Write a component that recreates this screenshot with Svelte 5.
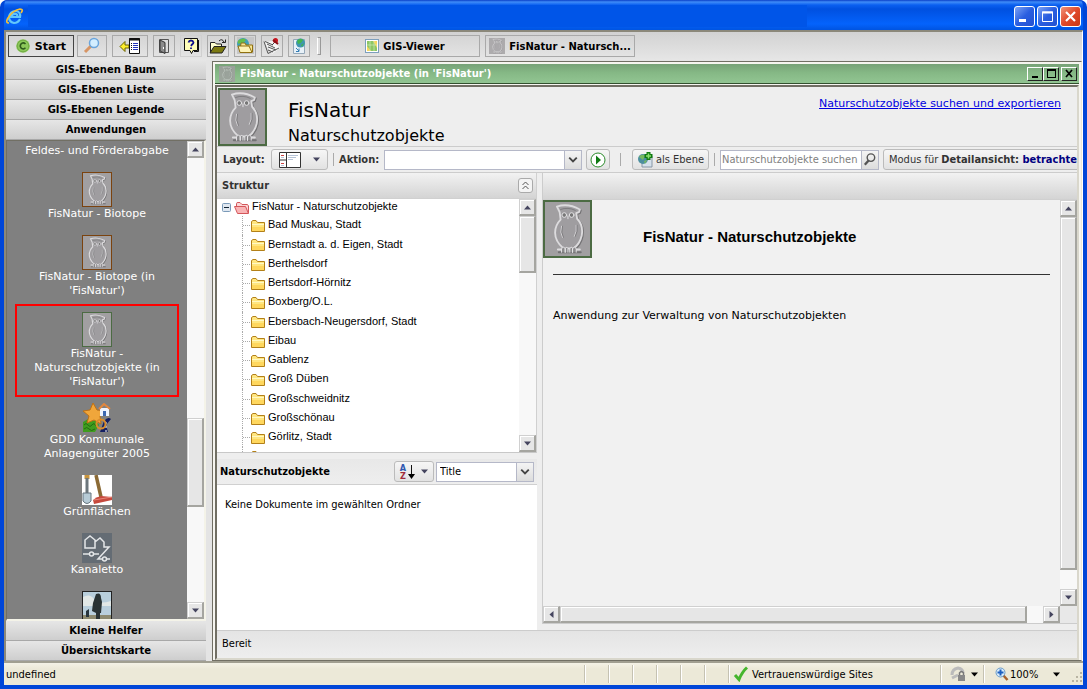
<script>
  const toolIcons = [
    { name: "help", label: "Hilfe" },
    { name: "open", label: "Öffnen" },
    { name: "globeFolder", label: "Dienste" },
    { name: "pin", label: "Notiz" },
    { name: "pageGlobe", label: "Export" },
  ];

  const topSections = ["GIS-Ebenen Baum", "GIS-Ebenen Liste", "GIS-Ebenen Legende", "Anwendungen"];
  const bottomSections = ["Kleine Helfer", "Übersichtskarte"];

  const apps = [
    { icon: "", title: "Feldes- und Förderabgabe" },
    { icon: "owlBrown", title: "FisNatur - Biotope" },
    { icon: "owlBrown", title: "FisNatur - Biotope (in 'FisNatur')" },
    { icon: "owlGreen", title: "FisNatur - Naturschutzobjekte (in 'FisNatur')", selected: true },
    { icon: "star", title: "GDD Kommunale Anlagengüter 2005" },
    { icon: "broom", title: "Grünflächen" },
    { icon: "canal", title: "Kanaletto" },
    { icon: "tree", title: "" },
  ];

  const folders = [
    "Bad Muskau, Stadt",
    "Bernstadt a. d. Eigen, Stadt",
    "Berthelsdorf",
    "Bertsdorf-Hörnitz",
    "Boxberg/O.L.",
    "Ebersbach-Neugersdorf, Stadt",
    "Eibau",
    "Gablenz",
    "Groß Düben",
    "Großschweidnitz",
    "Großschönau",
    "Görlitz, Stadt",
    "",
  ];

  let action = $state("");
  let sortField = $state("Title");
  let query = $state("");
</script>

{#snippet owl(cls)}
  <svg class="owl {cls}" viewBox="0 0 49 58" preserveAspectRatio="none" aria-hidden="true">
    <rect width="49" height="58" fill="#a19fa1" />
    <g fill="none" stroke-linejoin="round" stroke-linecap="round">
      <g stroke="#737274" stroke-width="2" transform="translate(1 1)">
        <path d="M13 5 Q25 1 38 8 L37 11 L34 12 L35 18 Q42 25 40 36 Q38 45 31 50 H20 Q11 42 11 33 Q11 25 17 19 L16 11 Z" />
        <path d="M14 53 H38" />
      </g>
      <g stroke="#dcdbdd" stroke-width="2">
        <path fill="#9f9da0" d="M13 5 Q25 1 38 8 L37 11 L34 12 L35 18 Q42 25 40 36 Q38 45 31 50 H20 Q11 42 11 33 Q11 25 17 19 L16 11 Z" />
        <path stroke-width="1" d="M18 26 Q16 33 19 38 M34 25 Q35 32 32 37" />
        <path d="M14 51 H18 M33 51 H38" />
      </g>
      <path d="M19 26 Q17 33 20 38 M35 25 Q36 32 33 37 M17 8 Q25 5 33 9" stroke="#7b7a7c" />
      <g stroke="#e8e7e9" stroke-width="1">
        <circle cx="21" cy="14" r="2.500" fill="#777" />
        <circle cx="29" cy="14" r="2.500" fill="#777" />
        <path d="M25 15 V18" />
        <path fill="#8a898b" d="M18 54 V50 Q20 47 22 50 V54 M22 54 V50 Q24 47 25 50 V54 M27 54 V50 Q29 47 30 50 V54 M30 54 V50 Q32 47 34 50 V54" />
      </g>
    </g>
  </svg>
{/snippet}

{#snippet arrow(dir)}
  <svg class="arrow" viewBox="0 0 7 7" aria-hidden="true">
    {#if dir === "up"}<path d="M0 5.500h7L3.500 1.500z" />{/if}
    {#if dir === "down"}<path d="M0 1.500h7L3.500 5.500z" />{/if}
    {#if dir === "left"}<path d="M5.500 0v7L1.500 3.500z" />{/if}
    {#if dir === "right"}<path d="M1.500 0v7L5.500 3.500z" />{/if}
  </svg>
{/snippet}

{#snippet scrollbar(dir, before, thumb, after)}
  <div class="scrollbar {dir}">
    <button type="button" aria-label="Zurück">{@render arrow(dir === "horizontal" ? "left" : "up")}</button>
    <div style="flex-grow: {before}"></div>
    <div class="thumb" style="flex-grow: {thumb}"></div>
    <div style="flex-grow: {after}"></div>
    <button type="button" aria-label="Weiter">{@render arrow(dir === "horizontal" ? "right" : "down")}</button>
  </div>
{/snippet}

{#snippet folder(cls)}
  <svg class="folder {cls}" viewBox="0 0 16 14" aria-hidden="true">
    {#if cls === "open"}
      <path d="M2.500 6V2.500Q2.500 1.500 4 1.500H6L8 3.500H13.500L14.500 5V12" fill="#fbd5d5" stroke="#d4565a" />
      <path d="M.5 5.500H11.500L14.500 12.500H3.500Z" fill="#f9b5b6" stroke="#d4565a" />
    {:else}
      <path d="M1.500 12.500V2.500L3 1.500H6L7.500 3.500H14.500V12.500Z" fill="#ffe680" stroke="#b38019" />
      <path d="M2 5.500H14" stroke="#fff8c4" />
      <path d="M2 8H14V12H2Z" fill="#ffd75e" />
    {/if}
  </svg>
{/snippet}

{#snippet toolIcon(name)}
  <svg width="20" height="18" viewBox="0 0 20 18" fill="none" aria-hidden="true">
    {#if name === "help"}
      <path d="M3.500 1.500H16.500V13.500H12L10.500 16.500L9 13.500H3.500Z" fill="#fffdb8" stroke="#111" />
      <path d="M17.500 3V14.500H13" stroke="#111" />
      <path d="M7.500 5.500Q8 3.500 10 3.500T12.500 5.500Q12.500 6.500 11 7.500L10 9M10 10.500V12" stroke="#10108c" stroke-width="1.800" />
    {:else if name === "open"}
      <path d="M2.500 15V5.500H7L8.500 7H13.500V9" fill="#ffffcf" stroke="#222" />
      <path d="M2 16L6 9.500H18L14 16Z" fill="#7c7a12" stroke="#222" />
      <path d="M11 4Q14 1 16 5M17.500 2.500V5.500H14" stroke="#222" />
    {:else if name === "globeFolder"}
      <rect x="2" width="17" height="17" fill="#c6c6c6" />
      <circle cx="8" cy="7" r="6" fill="#3f9fb8" />
      <path d="M4 3Q9 0 11 3Q8 7 6 6Q2 8 3 4" fill="#65bd4a" />
      <path d="M5 15L6 6H10L11 8H17.500V15Z" fill="#f7e694" stroke="#907010" />
      <path d="M5 15.500L3 9H14L17 15.500Z" fill="#fdf3b6" stroke="#907010" />
    {:else if name === "pin"}
      <path d="M2 5L12 4L18 11L10 17Z" fill="#f6f6f6" />
      <path d="M2 4.500L6 16.500M3 4.500L11 8M5 7L13 11M6 10L14 13M6 13L11 15M6 16.500L17 11" stroke="#555" />
      <path d="M10 8L13 5" stroke="#444" />
      <circle cx="13.500" cy="3.500" r="2.500" fill="#c8141e" />
      <path d="M11 3L16 7" stroke="#8e1018" stroke-width="2" />
    {:else}
      <path d="M4.500 2.500H15.500V16.500H4.500Z" fill="#e8f1f8" stroke="#93a7b8" />
      <circle cx="11.500" cy="6" r="4.500" fill="#3f96b0" />
      <path d="M8 4Q11 0 14 3L12 6L9 7ZM12 8L15 6L13 10" fill="#43b450" />
      <path d="M7 11L10 14M10 11.500V14.500H7" stroke="#357eb5" />
    {/if}
  </svg>
{/snippet}

<div class="window">
  <header class="titlebar">
    <svg width="18" height="18" viewBox="0 0 18 18" fill="none" aria-hidden="true">
      <path d="M14 12Q12 16 8 16Q3 15 3 10Q4 4 10 4Q15 5 14 10H5Q6 6.500 10 7Q12 8 11 10" stroke="#62c7fb" stroke-width="2.200" />
      <path d="M3 16Q-1 16 2 11Q6 4 14 2Q18 2 15 6" stroke="#f2bd39" stroke-width="1.700" />
    </svg>
    <div class="caption"></div>
    <button type="button" class="xp" aria-label="Minimieren">
      <svg viewBox="0 0 19 19"><path d="M4 12h7v3H4z" fill="#fff" /></svg>
    </button>
    <button type="button" class="xp" aria-label="Maximieren">
      <svg viewBox="0 0 19 19" fill="none"><path d="M4.500 5H14.500V14.500H4.500Z" stroke="#fff" /><path d="M4 5.500H15" stroke="#fff" stroke-width="2" /></svg>
    </button>
    <button type="button" class="xp close" aria-label="Schließen">
      <svg viewBox="0 0 19 19"><path d="M5 5L14 14M14 5L5 14" stroke="#fff" stroke-width="2.200" /></svg>
    </button>
  </header>

  <div class="client">
    <nav class="toolbar">
      <button type="button" class="start">
        <svg width="14" height="14" viewBox="0 0 14 14" fill="none" aria-hidden="true">
          <circle cx="7" cy="7" r="6.800" fill="#8cc85a" />
          <circle cx="7" cy="7" r="5.800" stroke="#72ac45" />
          <path d="M9.500 5Q8 3.500 6.500 4Q4 5 4.300 7.500Q5 10 7.500 10L9.500 9" stroke="#2e5a1c" stroke-width="1.500" />
        </svg>
        Start
      </button>
      <button type="button" class="find" aria-label="Suchen">
        <svg width="18" height="18" viewBox="0 0 18 18" fill="none">
          <path d="M2 15L8 9" stroke="#d79565" stroke-width="3" />
          <circle cx="11" cy="6" r="4.500" fill="#d3eeff" stroke="#6aa5dc" stroke-width="1.500" />
        </svg>
      </button>
      <button type="button" class="list" aria-label="Liste">
        <svg width="22" height="18" viewBox="0 0 22 18" fill="none">
          <path d="M1 9.500L6 4.500V8H10V11H6V14.500Z" fill="#ffef2e" stroke="#6b6200" />
          <path d="M10.500 1.500H20.500V16.500H10.500Z" fill="#fff" stroke="#111" />
          <path d="M10 2.500H21" stroke="#111" stroke-width="2" />
          <path d="M12 6.500H13M12 8.500H13M12 10.500H13M12 12.500H13" stroke="#111" />
          <path d="M14 6.500H19M14 8.500H19M14 10.500H19M14 12.500H19" stroke="#2233bb" />
        </svg>
      </button>
      <button type="button" class="tool" aria-label="Beenden">
        <svg width="12" height="16" viewBox="0 0 12 16" fill="none">
          <path d="M1.500 1.500H10.500V14.500H1.500Z" fill="#ddd" stroke="#555" />
          <path d="M2 2L7 4.500V15.500L2 13Z" fill="#8c8c8c" stroke="#333" />
          <path d="M5.500 9V11" stroke="#fff" />
        </svg>
      </button>
      {#each toolIcons as tool}
        <button type="button" class="tool" class:flat={tool.name === "help"} aria-label={tool.label}>
          {@render toolIcon(tool.name)}
        </button>
      {/each}
      <span class="grip"></span>
      <button type="button" class="task">
        <svg width="14" height="14" viewBox="0 0 14 14" fill="none" aria-hidden="true">
          <rect x=".5" y=".5" width="13" height="13" fill="#fff" stroke="#7d9fbc" />
          <path d="M2 2H12V12H2Z" fill="#8cc665" />
          <path d="M2 12V7L6 12ZM8 2H12V9Z" fill="#f4d65d" />
          <path d="M5 2V12M9 2V12M2 6H12" stroke="#d8efc5" stroke-width=".6" />
        </svg>
        GIS-Viewer
      </button>
      <button type="button" class="task">
        {@render owl("mini")}
        FisNatur - Natursch...
      </button>
    </nav>

    <div class="columns">
      <aside class="sidebar">
        {#each topSections as section}
          <button type="button" class="section">{section}</button>
        {/each}
        <div class="apps">
          <ul>
            {#each apps as app}
              <li class:selected={app.selected}>
                {#if app.icon === "owlBrown"}
                  {@render owl("brown")}
                {:else if app.icon === "owlGreen"}
                  {@render owl("green")}
                {:else if app.icon === "star"}
                  <svg width="30" height="30" viewBox="0 0 30 30" fill="none">
                    <path d="M1 19L6 16L10 18L14 17L17 22L13 29H1Z" fill="#3f9c1e" />
                    <path d="M2 22Q4 19 6 22T10 22T14 23M2 26Q5 23 7 26T13 26" stroke="#226c10" />
                    <path d="M11 0L15 7L24 8L18 13L19 21L12 17L5 20L7 13L1 8L8 7Z" fill="#f0a63b" stroke="#bf7114" />
                    <path d="M18 5H27V13H18Z" fill="#eef3ff" />
                    <path d="M17 6L22 1L28 6" stroke="#e2863d" stroke-width="2" />
                    <path d="M21 8H24V13H21Z" fill="#3b67b2" />
                    <path d="M18 29L22 18Q26 13 29 16L24 22L26 29Z" fill="#141f61" />
                    <path d="M24 29V19" stroke="#fff" stroke-dasharray="2" />
                    <circle cx="19" cy="21" r="4.500" stroke="#d98c2c" stroke-width="2" />
                  </svg>
                {:else if app.icon === "broom"}
                  <svg width="30" height="30" viewBox="0 0 30 30" fill="none">
                    <rect width="30" height="30" fill="#fff" />
                    <path d="M5 0V4" stroke="#c8953f" stroke-width="5" />
                    <path d="M5 3V18" stroke="#6c767c" stroke-width="3" />
                    <path d="M1 18H9V26Q5 31 1 26Z" fill="#b7cbd6" stroke="#66757e" />
                    <path d="M14 0L19 22" stroke="#8b6a35" stroke-width="3.500" />
                    <path d="M11 25Q14 22 19 21L30 22V25L12 29Z" fill="#c6493d" />
                    <path d="M12 25L30 22" stroke="#e8877a" />
                  </svg>
                {:else if app.icon === "canal"}
                  <svg width="30" height="30" viewBox="0 0 30 30" fill="none" stroke="#e4e6e8" stroke-width="1.500">
                    <rect width="30" height="30" fill="#646c74" stroke="none" />
                    <path d="M3 15V7L8 3L13 7V15ZM13 15V9L18 5L22 9V14H27L16 26H20M1 21H7M12 21H17M25 26H28" />
                    <circle cx="9.500" cy="21" r="2" />
                    <circle cx="22.500" cy="26" r="2" />
                  </svg>
                {:else if app.icon === "tree"}
                  <svg width="30" height="30" viewBox="0 0 30 30" fill="none">
                    <rect x=".5" y=".5" width="29" height="29" fill="#b9cfdc" stroke="#222" />
                    <path d="M1 6Q8 2 12 8T29 10V15H1Z" fill="#e2e8e6" />
                    <path d="M1 24H29V29H1Z" fill="#8d8a70" />
                    <path d="M14 3Q19 1 19 7L20 11L19 22H18V28H14V22L10 20L11 12Z" fill="#2a3334" />
                    <path d="M4 26V20L7 18V26Z" fill="#27343d" />
                  </svg>
                {/if}
                <span>{app.title}</span>
              </li>
            {/each}
          </ul>
          {@render scrollbar("vertical", 261, 87, 95)}
        </div>
        {#each bottomSections as section}
          <button type="button" class="section">{section}</button>
        {/each}
      </aside>

      <main class="frame">
        <div class="frame-title">
          {@render owl("mini")}
          <span>FisNatur - Naturschutzobjekte (in 'FisNatur')</span>
          <button type="button" aria-label="Minimieren"><svg viewBox="0 0 14 12"><path d="M4 8h6v2H4z" /></svg></button>
          <button type="button" aria-label="Maximieren"><svg viewBox="0 0 14 12"><path d="M3 1h9v9H3zM4 3v6h7V3z" fill-rule="evenodd" /></svg></button>
          <button type="button" class="last" aria-label="Schließen"><svg viewBox="0 0 14 12"><path d="M4 2L10 9M10 2L4 9" stroke="#000" stroke-width="1.700" /></svg></button>
        </div>

        <div class="inner">
          <div class="app-head">
            {@render owl("large")}
            <div class="names">
              <h1>FisNatur</h1>
              <h2>Naturschutzobjekte</h2>
            </div>
            <a href="#export">Naturschutzobjekte suchen und exportieren</a>
          </div>

          <div class="app-tools">
            <strong>Layout:</strong>
            <button type="button" class="ext layout" aria-label="Layout wählen">
              <svg width="22" height="16" viewBox="0 0 22 16" fill="none">
                <path d="M.5 .5H21.500V15.500H.5ZM7.500 0V16M0 8H7" fill="#fff" stroke="#333" />
                <path d="M2 3.500H5M2 11.500H5" stroke="#c44" />
                <path d="M2 5.500H5M2 13.500H5M9 3.500H19M9 5.500H17M9 7.500H14" stroke="#b5c2d6" />
              </svg>
              {@render arrow("down")}
            </button>
            <span class="sep"></span>
            <label for="action">Aktion:</label>
            <div class="combo action">
              <select id="action" bind:value={action}><option value=""></option></select>
              <svg viewBox="0 0 17 17" fill="none"><path d="M4.500 6L8.500 10L12.500 6" stroke="#444" stroke-width="2" /></svg>
            </div>
            <button type="button" class="ext play" aria-label="Ausführen">
              <svg width="16" height="16" viewBox="0 0 16 16"><circle cx="8" cy="8" r="7" fill="#fff" stroke="#2c8c2c" /><path d="M6 3.500V12.500L11 8Z" fill="#0e7a12" /></svg>
            </button>
            <span class="sep"></span>
            <button type="button" class="ext layer">
              <svg width="16" height="16" viewBox="0 0 16 16" aria-hidden="true">
                <path d="M5 4H15V15H5Z" fill="#d6e1ec" stroke="#8897a6" />
                <circle cx="6" cy="7" r="5" fill="#4c8fa0" />
                <path d="M2 5Q5 1 8 4L6 8ZM7 9L10 8L8 12" fill="#76b95f" />
                <path d="M11.500 0V8M7.500 4H15.500" stroke="#107b10" stroke-width="4" />
                <path d="M11.500 1.500V6.500M9 4H14" stroke="#8be06f" stroke-width="1.500" />
              </svg>
              als Ebene
            </button>
            <span class="sep"></span>
            <div class="search">
              <input type="text" bind:value={query} placeholder="Naturschutzobjekte suchen" aria-label="Naturschutzobjekte suchen" />
              <button type="button" aria-label="Suche starten">
                <svg viewBox="0 0 17 17" fill="none"><circle cx="9.500" cy="6.500" r="4" stroke="#555" stroke-width="1.500" /><path d="M7 9.500L3 14" stroke="#555" stroke-width="2.500" /></svg>
              </button>
            </div>
            <button type="button" class="ext mode">Modus für <b>Detailansicht: <em>betrachten</em></b></button>
          </div>

          <div class="panels">
            <div class="left">
              <section class="structure">
                <div class="panel-head">
                  <strong>Struktur</strong>
                  <button type="button" class="collapse" aria-label="Einklappen">
                    <svg viewBox="0 0 13 13" fill="none"><path d="M3.500 6L6.500 3L9.500 6M3.500 10L6.500 7L9.500 10" stroke="#555" /></svg>
                  </button>
                </div>
                <div class="tree">
                  <ul>
                    <li class="root">
                      <svg width="9" height="9" viewBox="0 0 9 9" aria-hidden="true"><rect x=".5" y=".5" width="8" height="8" rx="1" fill="#dfe7f0" stroke="#7b9ab8" /><path d="M2 4.500H7" stroke="#123" /></svg>
                      <i></i>
                      {@render folder("open")}
                      <span>FisNatur - Naturschutzobjekte</span>
                    </li>
                    {#each folders as name}
                      <li class="leaf">
                        <i></i>
                        {@render folder("closed")}
                        <span>{name}</span>
                      </li>
                    {/each}
                  </ul>
                  {@render scrollbar("vertical", 0, 55, 167)}
                </div>
              </section>

              <section class="documents">
                <div class="doc-head">
                  <strong>Naturschutzobjekte</strong>
                  <button type="button" class="ext sort" aria-label="Sortierung">
                    <span class="az"><b>A</b><b>Z</b></span>
                    <svg width="7" height="16" viewBox="0 0 7 16"><path d="M3.500 1V12" stroke="#111" /><path d="M0 10H7L3.500 15Z" /></svg>
                    {@render arrow("down")}
                  </button>
                  <div class="combo field">
                    <select bind:value={sortField} aria-label="Sortierfeld"><option>Title</option></select>
                    <svg viewBox="0 0 17 17" fill="none"><path d="M4.500 6L8.500 10L12.500 6" stroke="#444" stroke-width="2" /></svg>
                  </div>
                </div>
                <p>Keine Dokumente im gewählten Ordner</p>
              </section>
            </div>

            <section class="detail">
              <div class="panel-head"></div>
              <div class="detail-body">
                <article>
                  <div class="detail-title">
                    {@render owl("large")}
                    <h3>FisNatur - Naturschutzobjekte</h3>
                  </div>
                  <hr />
                  <p>Anwendung zur Verwaltung von Naturschutzobjekten</p>
                </article>
                {@render scrollbar("vertical", 0, 354, 19)}
                {@render scrollbar("horizontal", 0, 466, 16)}
              </div>
            </section>
          </div>

          <div class="app-status">Bereit</div>
        </div>
      </main>
    </div>
  </div>

  <footer class="statusbar">
    <span class="message">undefined</span>
    {#each [1, 2, 3, 4, 5, 6] as cell (cell)}
      <span class="cell"></span>
    {/each}
    <span class="cell zone">
      <svg width="16" height="16" viewBox="0 0 16 16" fill="none" aria-hidden="true"><path d="M2 9L6 13.500Q9 6 14 1.500" stroke="#45b52c" stroke-width="3" /></svg>
      Vertrauenswürdige Sites
    </span>
    <span class="cell lock">
      <svg width="16" height="16" viewBox="0 0 16 16" fill="none" aria-hidden="true">
        <path d="M2 9Q2 3 8 2Q13 3 13 7M2 12L8 9" stroke="#bbb" stroke-width="3" />
        <path d="M9.500 9V7Q11.500 4 13.500 7V9" stroke="#777" stroke-width="1.500" />
        <path d="M8 9H15V15H8Z" fill="#888" />
      </svg>
      {@render arrow("down")}
    </span>
    <span class="cell zoom">
      <svg width="14" height="14" viewBox="0 0 14 14" fill="none" aria-hidden="true">
        <path d="M8 8L12.500 13" stroke="#a8622c" stroke-width="2.500" />
        <circle cx="5.500" cy="5.500" r="4.500" fill="#d8ecfb" stroke="#6a9bc8" />
        <path d="M5.500 2.500V8.500M2.500 5.500H8.500" stroke="#1c5fc0" stroke-width="2" />
      </svg>
      <span>100%</span>
      {@render arrow("down")}
      <svg class="resize" width="11" height="11" viewBox="0 0 11 11" fill="#b8b4a2" aria-hidden="true">
        <path d="M8 0h2v2h-2zM4 4h2v2H4zM8 4h2v2H8zM0 8h2v2H0zM4 8h2v2H4zM8 8h2v2H8z" />
      </svg>
    </span>
  </footer>
</div>

<style>
  :global(body) {
    background: #fff;
  }

  .window,
  .window :global(*) {
    box-sizing: border-box;
  }

  .window {
    display: flex;
    flex-direction: column;
    height: 100vh;
    border: solid #0046d8;
    border-width: 0 4px 4px;
    border-radius: 7px 7px 0 0;
    background: #0046d8;
    overflow: hidden;
    font-family: "DejaVu Sans", Verdana, sans-serif;
    font-size: 11px;
    color: #000;
  }

  button {
    display: flex;
    align-items: center;
    justify-content: center;
    padding: 0;
    margin: 0;
    color: inherit;
    font: inherit;
    background: none;
    border: 0;
    border-radius: 0;
  }

  svg {
    display: block;
    flex: none;
  }

  ul,
  p,
  h1,
  h2,
  h3 {
    margin: 0;
    padding: 0;
    list-style: none;
  }

  /* window title */
  .titlebar {
    display: flex;
    flex: none;
    align-items: center;
    gap: 4px;
    height: 30px;
    margin: 0 -4px;
    padding: 2px 6px 0;
    background: linear-gradient(#0a3fc8 0, #3f8cf8 2px, #0a5ff0 5px, #0050e0 9px, #0463fc 24px, #0054e0);
  }

  .caption {
    flex: 1;
    height: 22px;
    margin-right: 205px;
    background: #0055e8;
  }

  .xp {
    width: 21px;
    height: 21px;
    margin-left: -2px;
    border: 1px solid #fff;
    border-radius: 3px;
    background: linear-gradient(135deg, #7da3f5, #2a5ee0 50%, #2350d0);
  }

  .xp.close {
    background: linear-gradient(135deg, #f0937a, #e0492a 50%, #c93815);
  }

  .xp svg {
    width: 19px;
    height: 19px;
  }

  .client {
    display: flex;
    flex: 1;
    flex-direction: column;
    min-height: 0;
    border-top: 2px solid #8b887a;
    border-left: 2px solid #8b887a;
    border-right: 1px solid #fff;
    background: #e4e4e4;
  }

  /* main toolbar */
  .toolbar {
    display: flex;
    flex: none;
    align-items: center;
    gap: 5px;
    height: 28px;
    padding: 0 2px;
    background: linear-gradient(#d2d2d2, #e6e6e6);
    font-size: 10px;
    font-weight: bold;
  }

  .toolbar button {
    flex: none;
    height: 22px;
    border: 1px solid #a9a9a9;
  }

  .toolbar .start {
    gap: 5px;
    width: 66px;
    margin-right: -2px;
    border-color: #444;
    font-size: 11px;
  }

  .toolbar .find {
    width: 30px;
  }

  .toolbar .list {
    width: 36px;
  }

  .toolbar .tool {
    width: 22px;
  }

  .toolbar .flat {
    border-color: #d0d0d0;
  }

  .grip {
    width: 4px;
    height: 18px;
    margin: 0 4px 0 2px;
    border: 1px solid #999;
    border-left-color: #fff;
    background: #ddd;
  }

  .toolbar .task {
    gap: 4px;
    width: 150px;
    white-space: nowrap;
  }

  .columns {
    display: flex;
    flex: 1;
    min-height: 0;
    gap: 6px;
  }

  /* sidebar */
  .sidebar {
    display: flex;
    flex: none;
    flex-direction: column;
    width: 200px;
  }

  .section {
    flex: none;
    height: 20px;
    border-bottom: 1px solid #a8a8a8;
    background: linear-gradient(#e6e6e6, #cecece);
    font-size: 10px;
    font-weight: bold;
  }

  .apps {
    display: flex;
    flex: 1;
    min-height: 0;
    border: 1px solid #716f64;
    border-right: 2px solid #f4f3e8;
    border-bottom: 2px solid #f4f3e8;
    background: #808080;
  }

  .apps ul {
    display: flex;
    flex: 1;
    flex-direction: column;
    align-items: center;
    gap: 14px;
    padding-top: 3px;
    overflow: hidden;
    color: #fff;
    line-height: 14px;
    text-align: center;
  }

  .apps li {
    display: flex;
    flex: none;
    flex-direction: column;
    align-items: center;
    width: 160px;
  }

  .apps .selected {
    width: 148px;
    outline: 2px solid #f00;
    outline-offset: 6px;
  }

  .owl {
    width: 30px;
    height: 35px;
    border: 1px solid #4c6b43;
  }

  .owl.brown {
    border-color: #7b430f;
  }

  .owl.large {
    width: 49px;
    height: 58px;
    border-width: 2px;
  }

  .owl.mini {
    width: 16px;
    height: 16px;
    border: 0;
    opacity: 0.8;
  }

  /* scrollbars */
  .scrollbar {
    display: flex;
    flex: none;
    background: #f8f8f8;
  }

  .scrollbar.vertical {
    flex-direction: column;
    width: 17px;
  }

  .scrollbar.horizontal {
    height: 17px;
  }

  .scrollbar button {
    flex: none;
    width: 17px;
    height: 17px;
  }

  .scrollbar button,
  .thumb {
    border: 1px solid #d0d0d0;
    border-right: 2px solid #a5a5a0;
    border-bottom: 2px solid #a5a5a0;
    background: #e6e6e6;
    box-shadow: inset 1px 1px #fff;
  }

  .arrow {
    width: 7px;
    height: 7px;
    fill: #44445e;
  }

  /* application frame */
  .frame {
    display: flex;
    flex: 1;
    flex-direction: column;
    min-width: 0;
    margin-top: 1px;
    padding: 2px 2px 0;
    border: 1px solid #716f64;
    border-right-color: #ece9d8;
    background: #f6f5f0;
  }

  .frame-title {
    display: flex;
    flex: none;
    align-items: center;
    height: 20px;
    padding: 0 2px 0 4px;
    border-bottom: 1px solid #33502f;
    background: linear-gradient(#77a277, #85b885 45%, #92c592);
    color: #fff;
    font-size: 10px;
    font-weight: bold;
  }

  .frame-title span {
    flex: 1;
    padding-left: 5px;
  }

  .frame-title button {
    width: 16px;
    height: 14px;
    border: 1px solid #fff;
    border-right-color: #222;
    border-bottom-color: #222;
  }

  .frame-title .last {
    margin-left: 2px;
  }

  .frame-title button svg {
    width: 14px;
    height: 12px;
  }

  .inner {
    display: flex;
    flex: 1;
    flex-direction: column;
    min-height: 0;
    margin-top: 1px;
    border: 2px solid #716f64;
    border-right-color: #d9d7cc;
    border-bottom-color: #d9d7cc;
    background: #eee;
  }

  .app-head {
    display: flex;
    flex: none;
    height: 60px;
    padding: 1px 16px 0 1px;
    border-bottom: 1px solid #ccc;
  }

  .names {
    flex: 1;
    padding: 8px 0 0 21px;
  }

  .names h1 {
    font-size: 20px;
    font-weight: normal;
    line-height: 28px;
  }

  .names h2 {
    font-size: 16px;
    font-weight: normal;
    line-height: 24px;
  }

  .app-head a {
    padding-top: 8px;
    color: #0000e0;
    line-height: 16px;
  }

  .app-tools {
    display: flex;
    flex: none;
    align-items: center;
    height: 26px;
    padding-left: 6px;
    border-bottom: 1px solid #ccc;
    overflow: hidden;
    white-space: nowrap;
  }

  .app-tools,
  .panel-head,
  .doc-head,
  .documents p,
  .app-status,
  .statusbar {
    font-family: "DejaVu Sans Condensed", Tahoma, sans-serif;
  }

  .app-tools strong,
  .app-tools label,
  .panel-head strong {
    flex: none;
    color: #333;
    font-weight: bold;
  }

  .app-tools strong {
    width: 48px;
  }

  .app-tools label {
    width: 45px;
  }

  .ext {
    flex: none;
    gap: 8px;
    height: 21px;
    border: 1px solid #bbb;
    border-radius: 3px;
    background: linear-gradient(#f6f6f6, #e2e2e2);
    color: #333;
  }

  .ext.layout {
    gap: 12px;
    width: 57px;
  }

  .ext.play {
    width: 24px;
    margin: 0 5px 0 4px;
  }

  .ext.layer {
    gap: 3px;
    width: 77px;
    margin-left: 6px;
  }

  .ext.mode {
    gap: 3px;
    margin-left: 4px;
    padding: 0 5px;
  }

  .ext.mode em {
    color: #000080;
    font-style: normal;
  }

  .sep {
    flex: none;
    width: 1px;
    height: 13px;
    margin: 0 5px;
    background: #aaa;
  }

  .combo {
    display: grid;
    flex: none;
    height: 20px;
    border: 1px solid #b5b8c8;
  }

  .combo select,
  .combo svg {
    grid-area: 1 / 1;
  }

  .combo select {
    min-width: 0;
    padding: 0 20px 0 3px;
    border: 0;
    border-radius: 0;
    appearance: none;
    background: #fff;
    font: inherit;
  }

  .combo svg {
    justify-self: end;
    width: 17px;
    height: 18px;
    border-left: 1px solid #b5b8c8;
    background: linear-gradient(#f4f4f4, #dcdcdc);
    pointer-events: none;
  }

  .combo.action {
    width: 198px;
  }

  .search {
    display: flex;
    flex: none;
    width: 159px;
    height: 20px;
    border: 1px solid #b5b8c8;
  }

  .search input {
    flex: 1;
    min-width: 0;
    padding: 0 1px;
    border: 0;
    background: #fff;
    font: inherit;
  }

  .search input::placeholder {
    color: #808080;
  }

  .search button {
    width: 17px;
    border-left: 1px solid #b5b8c8;
    background: linear-gradient(#f4f4f4, #dcdcdc);
  }

  .search button svg {
    width: 16px;
    height: 17px;
  }

  /* panels */
  .panels {
    display: flex;
    flex: 1;
    gap: 5px;
    min-height: 0;
  }

  .left {
    display: flex;
    flex: none;
    flex-direction: column;
    gap: 6px;
    width: 320px;
  }

  .panel-head {
    display: flex;
    flex: none;
    align-items: center;
    justify-content: space-between;
    height: 26px;
    padding: 0 3px 0 5px;
    border-bottom: 1px solid #d0d0d0;
    background: linear-gradient(#f2f2f2, #d4d4d4);
  }

  .collapse {
    width: 15px;
    height: 15px;
    border: 1px solid #aaa;
    border-radius: 3px;
    background: #f4f4f4;
  }

  .collapse svg {
    width: 13px;
    height: 13px;
  }

  .structure {
    display: flex;
    flex: 280;
    flex-direction: column;
    min-height: 0;
    border-right: 1px solid #d0d0d0;
    border-bottom: 1px solid #c8c8c8;
  }

  .tree {
    display: flex;
    flex: 1;
    min-height: 0;
    background: #fff;
    font-family: "Liberation Sans", Arial, sans-serif;
  }

  .tree ul {
    display: grid;
    flex: 1;
    grid-template-rows: 17px;
    grid-auto-rows: 19px 20px 19px 19px;
    align-content: start;
    padding-left: 5px;
    overflow: hidden;
  }

  .tree li {
    display: flex;
    align-items: center;
    white-space: nowrap;
  }

  .tree span {
    line-height: 14px;
    padding-bottom: 3px;
  }

  .root i {
    width: 3px;
  }

  .leaf {
    margin-left: 20px;
    border-left: 1px dotted #aaa;
  }

  .leaf i {
    width: 7px;
    border-top: 1px dotted #aaa;
  }

  .folder {
    width: 16px;
    height: 14px;
    margin-right: 2px;
    fill: none;
  }

  .documents {
    flex: 171;
    min-height: 0;
    background: #fff;
  }

  .doc-head {
    display: flex;
    align-items: center;
    height: 26px;
    padding: 0 3px;
    border-bottom: 1px solid #d0d0d0;
    background: linear-gradient(#e8e8e8, #eee);
  }

  .doc-head strong {
    flex: 1;
  }

  .ext.sort {
    gap: 2px;
    width: 40px;
    margin-right: 2px;
  }

  .az {
    display: grid;
    color: #a02c3c;
    font-size: 9px;
    line-height: 8px;
  }

  .az b:first-child {
    color: #3058b0;
  }

  .sort .arrow {
    margin-left: 4px;
  }

  .combo.field {
    width: 98px;
  }

  .documents p {
    padding: 13px 8px;
    line-height: 14px;
  }

  .detail {
    display: flex;
    flex: 1;
    flex-direction: column;
    min-width: 0;
    margin-bottom: 6px;
    border-left: 1px solid #ccc;
    border-bottom: 1px solid #ccc;
  }

  .detail .panel-head {
    height: 27px;
  }

  .detail-body {
    display: grid;
    flex: 1;
    grid-template: 1fr 17px / 1fr 17px;
    min-height: 0;
    background: #e8e8e8;
  }

  article {
    min-width: 0;
    background: #f1f1f1;
    overflow: hidden;
  }

  .detail-title {
    display: flex;
    height: 74px;
  }

  .detail-title h3 {
    padding: 28px 0 0 51px;
    font-family: "Liberation Sans", Arial, sans-serif;
    font-size: 15px;
    line-height: 18px;
  }

  hr {
    height: 1px;
    margin: 0 10px;
    border: 0;
    background: #333;
  }

  article p {
    padding: 34px 10px;
    line-height: 14px;
  }

  .app-status {
    flex: none;
    height: 28px;
    padding-left: 5px;
    border-top: 1px solid #ccc;
    background: linear-gradient(#e4e4e4, #eee);
    line-height: 26px;
  }

  /* browser status bar */
  .statusbar {
    display: flex;
    flex: none;
    align-items: center;
    height: 24px;
    border-top: 2px solid #a19f91;
    background: linear-gradient(#f4f2e6, #ece9d8 6px, #ece9d8);
    white-space: nowrap;
  }

  .message {
    flex: 1;
    padding-left: 2px;
  }

  .cell {
    display: flex;
    flex: none;
    align-items: center;
    width: 24px;
    height: 18px;
    border-left: 1px solid #c5c2b2;
    box-shadow: inset 1px 0 #fff;
  }

  .cell.zone {
    gap: 3px;
    width: 212px;
    padding-left: 4px;
  }

  .cell.lock {
    gap: 5px;
    width: 43px;
    padding-left: 9px;
  }

  .cell.zoom {
    width: 100px;
    gap: 1px;
    padding-left: 11px;
  }

  .cell.zoom span {
    width: 42px;
  }

  .cell .arrow {
    fill: #000;
  }

  .resize {
    align-self: end;
    margin-left: auto;
  }
</style>
